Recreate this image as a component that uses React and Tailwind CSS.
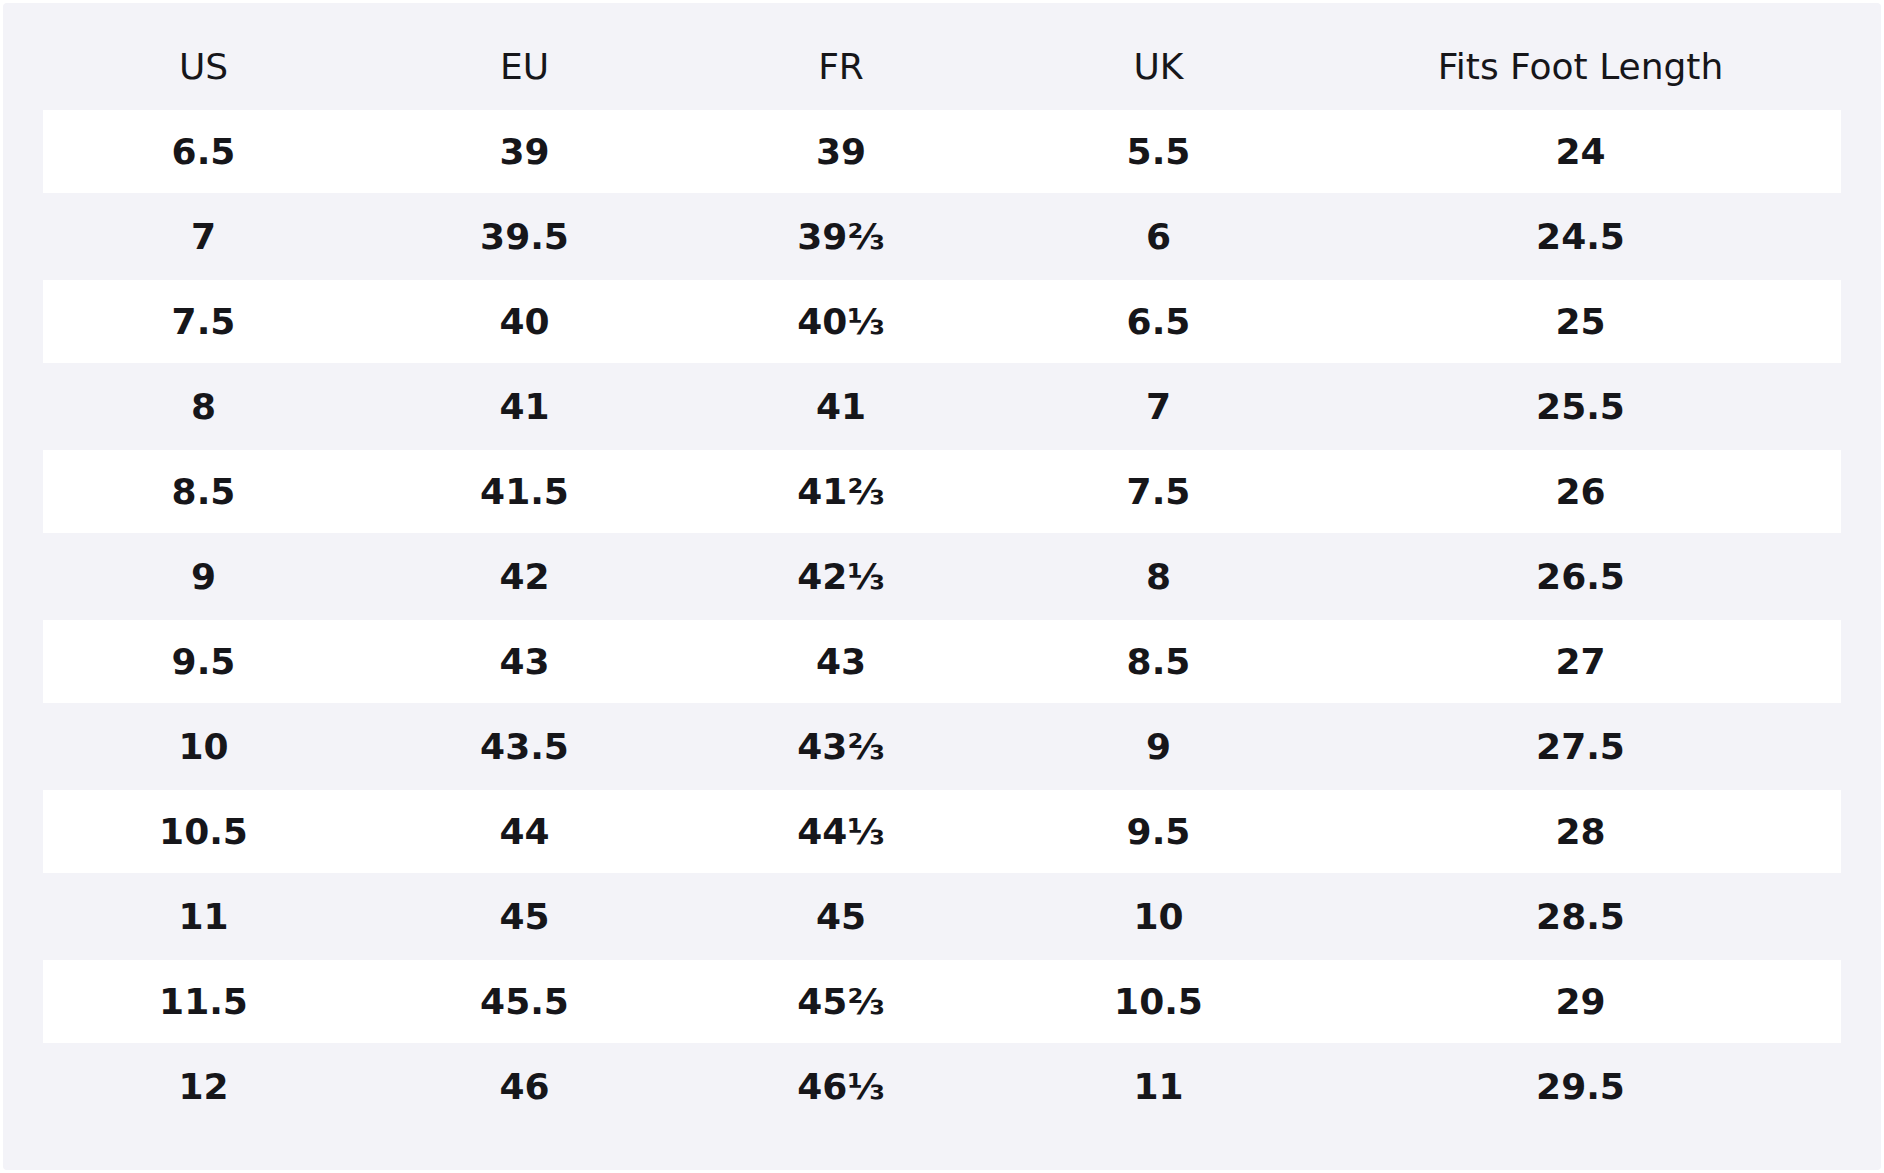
import React from "react";

const rows = [
  ["6.5", "39", "39", "5.5", "24"],
  ["7", "39.5", "39⅔", "6", "24.5"],
  ["7.5", "40", "40⅓", "6.5", "25"],
  ["8", "41", "41", "7", "25.5"],
  ["8.5", "41.5", "41⅔", "7.5", "26"],
  ["9", "42", "42⅓", "8", "26.5"],
  ["9.5", "43", "43", "8.5", "27"],
  ["10", "43.5", "43⅔", "9", "27.5"],
  ["10.5", "44", "44⅓", "9.5", "28"],
  ["11", "45", "45", "10", "28.5"],
  ["11.5", "45.5", "45⅔", "10.5", "29"],
  ["12", "46", "46⅓", "11", "29.5"],
];

const headers = ["US", "EU", "FR", "UK", "Fits Foot Length"];

const cols = "grid grid-cols-[321px_321px_312px_323px_1fr] items-center";

const App = () => {
  return (
    <div className="bg-white p-[3px] text-[36px] text-[#16161a] font-['DejaVu_Sans',sans-serif]">
      <div className="bg-[#f3f3f8] rounded-sm px-10 pt-5 pb-10">
        <div className={`${cols} h-[87px]`}>
          {headers.map((h) => (
            <div key={h} className="text-center">
              {h}
            </div>
          ))}
        </div>

        {rows.map((r, i) => (
          <div
            key={i}
            className={`${cols} font-bold ${
              i % 2 === 0 ? "bg-white h-[83px]" : "h-[87px]"
            }`}
          >
            {r.map((v, j) => (
              <div key={j} className="text-center">
                {v}
              </div>
            ))}
          </div>
        ))}
      </div>
    </div>
  );
};

export default App;
